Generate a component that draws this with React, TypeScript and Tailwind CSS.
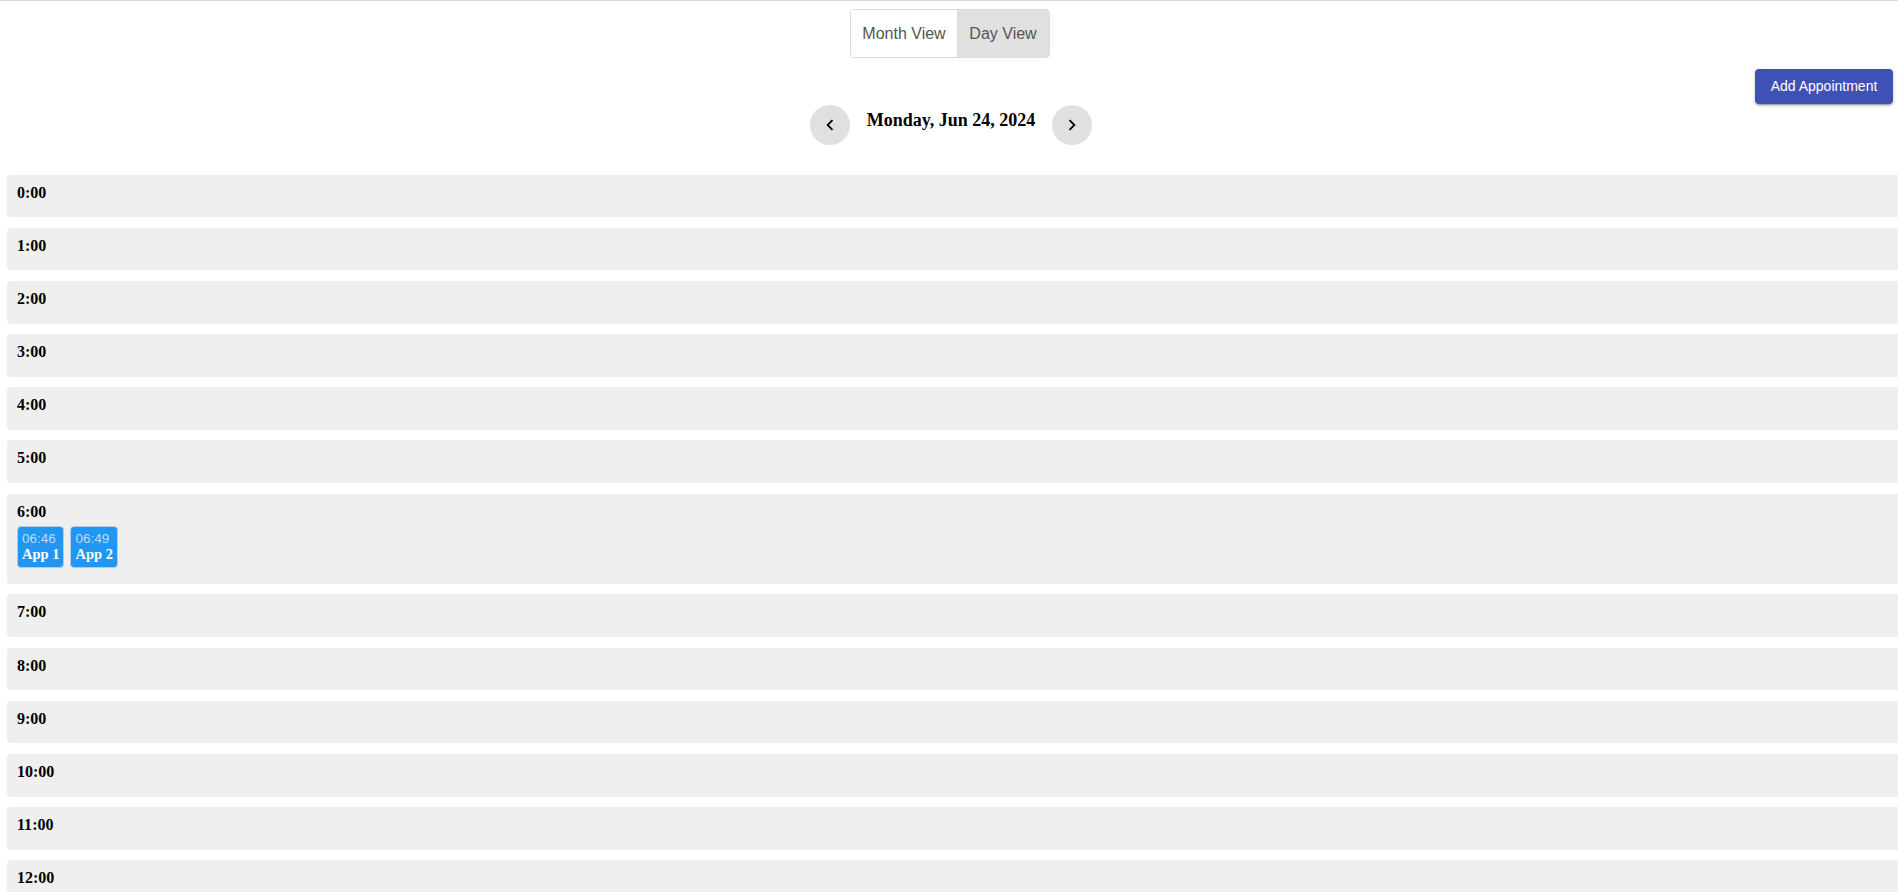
import React from "react";
import { MdChevronLeft, MdChevronRight } from "react-icons/md";

const hours = Array.from({ length: 13 }, (_, i) => i);

const appointments: Record<number, { time: string; title: string }[]> = {
  6: [
    { time: "06:46", title: "App 1" },
    { time: "06:49", title: "App 2" },
  ],
};

export default function App() {
  return (
    <div
      className="h-screen overflow-hidden bg-white border-t border-[#dcdcdc]"
      style={{ fontFamily: '"Liberation Serif", "Times New Roman", serif' }}
    >
      <div className="flex justify-center pt-[8px] pl-[2px]">
        <div className="flex h-[49px] rounded-[4px] border border-[#dadada] overflow-hidden font-['Liberation_Sans',Arial,sans-serif] text-[16px] text-[#555]">
          <div className="flex w-[106px] items-center justify-center bg-white">Month View</div>
          <div className="flex w-[92px] items-center justify-center bg-[#e0e0e0]">Day View</div>
        </div>
      </div>

      <div className="flex justify-end mt-[11px] pr-[5px]">
        <button className="h-[35px] w-[138px] rounded-[4px] bg-[#3f51b5] text-white text-[14px] font-['Liberation_Sans',Arial,sans-serif] shadow-[0_3px_1px_-2px_rgba(0,0,0,0.2),0_2px_2px_0_rgba(0,0,0,0.14),0_1px_5px_0_rgba(0,0,0,0.12)]">
          Add Appointment
        </button>
      </div>

      <div className="flex justify-center items-start mt-[1px] pl-[4px]">
        <button className="flex h-[40px] w-[40px] items-center justify-center rounded-full bg-[#e0e0e0] text-black">
          <MdChevronLeft size={22} />
        </button>
        <div className="mx-[17px] mt-[5px] text-[18px] font-bold leading-[20.7px] text-black">
          Monday, Jun 24, 2024
        </div>
        <button className="flex h-[40px] w-[40px] items-center justify-center rounded-full bg-[#e0e0e0] text-black">
          <MdChevronRight size={22} />
        </button>
      </div>

      <div className="mt-[29.5px] pl-[7px] -mr-[20px] flex flex-col gap-[10.5px]">
        {hours.map((h) => {
          const apps = appointments[h];
          return (
            <div key={h} className="rounded-[4px] bg-[#efefef] pl-[10px] pt-[9px] pb-[15.7px]">
              <div className="text-[16px] font-bold leading-[18px] text-black">{h}:00</div>
              {apps && (
                <div className="mt-[5px] flex gap-[6px]">
                  {apps.map((a) => (
                    <div
                      key={a.title}
                      className="h-[42.6px] rounded-[4px] border border-[#b5cce3] bg-[#2196f3] px-[4px] pt-[4px]"
                    >
                      <div className="font-['Liberation_Sans',Arial,sans-serif] text-[13.5px] leading-[15px] text-[rgba(255,255,255,0.7)]">
                        {a.time}
                      </div>
                      <div className="text-[14.5px] font-bold leading-[16px] text-white">{a.title}</div>
                    </div>
                  ))}
                </div>
              )}
            </div>
          );
        })}
      </div>
    </div>
  );
}
